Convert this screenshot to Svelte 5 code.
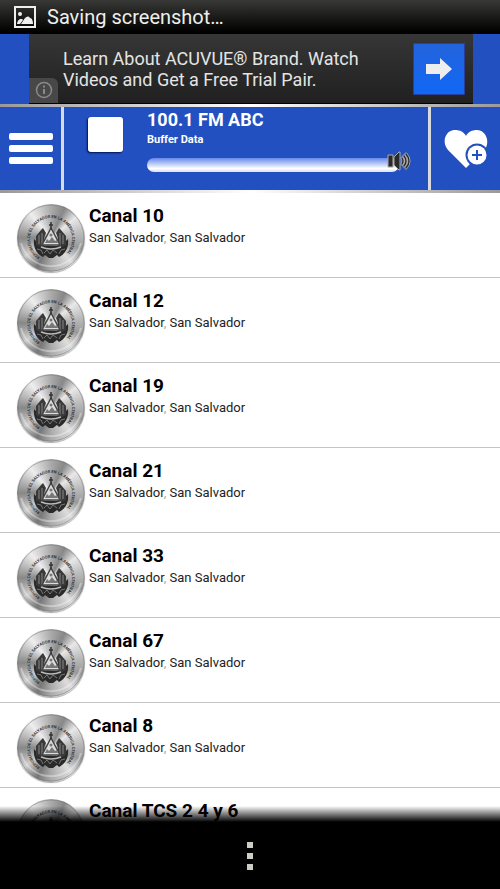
<script lang="ts">
  interface Station {
    name: string;
    city: string;
    region: string;
  }

  const names = [
    'Canal 10',
    'Canal 12',
    'Canal 19',
    'Canal 21',
    'Canal 33',
    'Canal 67',
    'Canal 8',
    'Canal TCS 2 4 y 6'
  ];

  const stations: Station[] = names.map((name) => ({
    name,
    city: 'San Salvador',
    region: 'San Salvador'
  }));

  let volume = $state(100);
</script>

<!-- shared crest, reused by every station -->
<svg class="defs" aria-hidden="true">
  <defs>
    <path id="ring" d="M22.9 52.8A21 21 0 1 1 45.1 52.8" />
    <symbol id="crest" viewBox="0 0 68 68">
      <circle cx="34" cy="34" r="33" fill="none" stroke="#777" stroke-opacity="0.5" />
      <path d="M4 39a31 31 0 0 0 60 0" fill="none" stroke="#fff" stroke-opacity="0.35" stroke-width="2" />
      <text font-family="Roboto, sans-serif" font-size="4" font-weight="500" fill="#222">
        <textPath href="#ring">REPÚBLICA DE EL SALVADOR EN LA AMÉRICA CENTRAL</textPath>
      </text>
      <path
        d="M17 35c-1 9 3 15 9 18l2-2 4 3h4l4-3 2 2c6-3 10-9 9-18l-4 4-5 3H26l-5-3z"
        fill="#2a2a2a"
      />
      <path d="M20 45l4 1 2 4M27 49l3-3 3 4 3-4 4 3M48 45l-4 1-2 4" fill="none" stroke="#777" stroke-width="1" />
      <path d="M24 26l-5 6v9l6 3 4-4-2-6 2-5-3-5zM44 26l5 6v9l-6 3-4-4 2-6-2-5 3-5z" fill="#3a3a3a" />
      <path d="M22 31v9M25 29v12M43 29v12M46 31v9" stroke="#888" stroke-width="1" />
      <path d="M34 24l9 17H25z" fill="#ddd" stroke="#444" stroke-width="1.5" />
      <path d="M28 39l2-4 2 2 3-4 3 4 2-1 1 3z" fill="#777" />
      <path d="M34 18v7M32 21h4" stroke="#333" stroke-width="1.5" />
      <circle cx="34" cy="31" r="1.5" fill="#777" />
      <path d="M24 43q10 4 20 0" fill="none" stroke="#bbb" stroke-width="1.5" />
    </symbol>
  </defs>
</svg>

<div class="app">
  <div class="status-bar">
    <svg viewBox="0 0 22 22" width="22" height="22" aria-hidden="true">
      <rect x="1" y="1" width="20" height="20" fill="none" stroke="#eee" stroke-width="2" />
      <circle cx="6" cy="8" r="2" fill="#eee" />
      <path d="M3 18c0-3 2-5 4-5 1 0 2 0 2 1l-3 4z" fill="#eee" />
      <path d="M7 18l4-6c2-2 4-2 5 0 2 0 3 3 3 6z" fill="#eee" />
    </svg>
    <span>Saving screenshot…</span>
  </div>

  <div class="ad-strip">
    <a class="ad" href="#ad">
      <span class="ad-text">Learn About ACUVUE® Brand. Watch Videos and Get a Free Trial Pair.</span>
      <span class="ad-go">
        <svg viewBox="0 0 52 52" width="52" height="52" aria-hidden="true">
          <path d="M13 21h14v-6l12 11-12 11v-6H13z" fill="#eee" />
        </svg>
      </span>
      <span class="ad-info">
        <svg viewBox="0 0 18 18" width="18" height="18" aria-hidden="true">
          <circle cx="9" cy="9" r="7.5" fill="none" stroke="#8a8a8a" stroke-width="1.5" />
          <path d="M9 8v5M9 4.5v2" stroke="#8a8a8a" stroke-width="2" />
        </svg>
      </span>
    </a>
  </div>

  <header class="player">
    <button class="menu-btn" aria-label="Menu">
      <i></i><i></i><i></i>
    </button>
    <div class="now-playing">
      <button class="stop-btn" aria-label="Stop"></button>
      <div class="track-info">
        <h1>100.1 FM ABC</h1>
        <p>Buffer Data</p>
        <div class="volume">
          <input type="range" min="0" max="100" bind:value={volume} aria-label="Volume" />
          <span class="speaker" style:left="{volume}%">
            <svg viewBox="0 0 24 20" width="24" height="20" aria-hidden="true">
              <g stroke="#aaa" stroke-width="1" fill="#292929">
                <path d="M1 4h5v12H1z" />
                <path d="M7 6l5-5h1v18h-1l-5-5z" />
              </g>
              <g fill="none" stroke="#aaa" stroke-width="3" stroke-linecap="round">
                <path d="M15 7q2 3 0 6M17 5q4 5 0 10M19 3q6 7 0 14" />
              </g>
              <g fill="none" stroke="#292929" stroke-width="1.3" stroke-linecap="round">
                <path d="M15 7q2 3 0 6M17 5q4 5 0 10M19 3q6 7 0 14" />
              </g>
            </svg>
          </span>
        </div>
      </div>
    </div>
    <button class="fav-btn" aria-label="Add to favorites">
      <svg viewBox="0 0 44 40" width="44" height="40" aria-hidden="true">
        <path
          d="M22 39L6 23C1 18 0 14 1 9 3 3 7 1 11 1c5 0 9 2 11 6 2-4 6-6 11-6 5 0 9 4 10 9 1 6-1 10-5 13z"
          fill="#fff"
        />
        <circle cx="33" cy="26" r="11.5" fill="#2250c0" />
        <circle cx="33" cy="26" r="9.5" fill="#fff" />
        <path d="M33 21v10M28 26h10" stroke="#2250c0" stroke-width="2" />
      </svg>
    </button>
  </header>

  <main class="stations">
    <ul>
      {#each stations as station}
        <li>
          <a class="station" href="#station">
            <span class="badge">
              <svg width="68" height="68" aria-hidden="true"><use href="#crest" /></svg>
            </span>
            <span class="station-info">
              <strong>{station.name}</strong>
              <small>{station.city}<span class="comma">,</span> {station.region}</small>
            </span>
          </a>
        </li>
      {/each}
    </ul>
  </main>

  <nav class="nav-bar">
    <button class="more-btn" aria-label="More options">
      <i></i><i></i><i></i>
    </button>
  </nav>
</div>

<style>
  :global(body) {
    margin: 0;
    background: #000;
  }

  .defs {
    position: absolute;
    width: 0;
    height: 0;
  }

  .app {
    display: flex;
    flex-direction: column;
    height: 100vh;
    font-family: Roboto, sans-serif;
    background: #fff;
  }

  button {
    padding: 0;
    border: none;
    background: none;
    cursor: pointer;
  }

  a {
    color: inherit;
    text-decoration: none;
  }

  .status-bar {
    display: flex;
    flex: none;
    align-items: center;
    gap: 11px;
    height: 34px;
    padding-left: 14px;
    box-sizing: border-box;
    background: linear-gradient(#383836, #000 95%);
    color: #eee;
    font-size: 20px;
  }

  .ad-strip {
    flex: none;
    padding: 0 27px 0 29px;
    background: #2250c0;
  }

  .ad {
    position: relative;
    display: flex;
    align-items: center;
    justify-content: space-between;
    height: 70px;
    padding: 0 8px 0 34px;
    box-sizing: border-box;
    border-bottom: 1px solid #000;
    background: linear-gradient(#363636, #202020);
    color: #e4e4e4;
  }

  .ad-text {
    max-width: 320px;
    font-size: 18px;
    line-height: 21px;
  }

  .ad-go {
    display: flex;
    border-radius: 2px;
    background: linear-gradient(#2463dc, #1068f4);
    box-shadow: 0 0 0 1px #2b3f9a inset;
  }

  .ad-info {
    position: absolute;
    left: 0;
    bottom: 0;
    display: flex;
    padding: 3px 5px 4px 6px;
    border-top-right-radius: 6px;
    background: #484848;
  }

  .player {
    display: flex;
    flex: none;
    height: 89px;
    box-sizing: border-box;
    border: solid;
    border-width: 3px 0;
    border-image: linear-gradient(90deg, #2250c0 3px, #999 3px, #fff 50%, #999) 3;
    background: #2250c0;
    color: #fff;
  }

  .menu-btn {
    display: flex;
    flex-direction: column;
    align-items: center;
    justify-content: center;
    gap: 5px;
    width: 61px;
  }

  .menu-btn i {
    width: 44px;
    height: 7px;
    border-radius: 2px;
    background: #fff;
  }

  .now-playing {
    display: flex;
    flex: 1;
    align-items: flex-start;
    gap: 24px;
    padding: 0 17px 0 24px;
    border: solid #d9d9e0;
    border-width: 0 3px;
  }

  .stop-btn {
    width: 35px;
    height: 35px;
    margin-top: 10px;
    border-radius: 3px;
    background: #fff;
    box-shadow: -1px 1px 2px #001050;
  }

  .track-info {
    flex: 1;
  }

  h1 {
    margin: 0;
    font-size: 18px;
    line-height: 26px;
  }

  p {
    margin: 0;
    font-size: 11px;
    font-weight: 700;
    line-height: 14px;
  }

  .volume {
    position: relative;
    height: 14px;
    margin: 11px 12px 0 0;
  }

  .volume input {
    display: block;
    width: 100%;
    height: 14px;
    margin: 0;
    border-radius: 7px;
    background: linear-gradient(#6688ea, #fff 75%, #d5dffc);
    appearance: none;
    cursor: pointer;
  }

  .volume input::-webkit-slider-thumb {
    width: 24px;
    height: 20px;
    opacity: 0;
    appearance: none;
  }

  .speaker {
    position: absolute;
    bottom: 1px;
    display: flex;
    transform: translateX(-50%);
    pointer-events: none;
  }

  .fav-btn {
    display: flex;
    align-items: center;
    justify-content: center;
    width: 69px;
  }

  .stations {
    position: relative;
    flex: 1;
    min-height: 0;
    overflow: hidden;
  }

  .stations::after {
    content: '';
    position: absolute;
    right: 0;
    bottom: 0;
    left: 0;
    height: 16px;
    background: linear-gradient(transparent, #000);
    pointer-events: none;
  }

  ul {
    margin: 0;
    padding: 0;
    list-style: none;
  }

  .station {
    display: flex;
    gap: 4px;
    height: 85px;
    padding: 11px 17px 0;
    box-sizing: border-box;
    border-bottom: 1px solid #c4c4c4;
  }

  .badge {
    width: 68px;
    height: 68px;
    border-radius: 50%;
    background: conic-gradient(
      #aaa,
      #888 25deg,
      #e8e8e8 50deg,
      #bbb 80deg,
      #999 110deg,
      #ddd 140deg,
      #aaa 180deg,
      #777 205deg,
      #ccc 235deg,
      #888 270deg,
      #bbb 295deg,
      #eee 320deg,
      #aaa
    );
    box-shadow: 0 1px 1px #aaa;
  }

  .station-info {
    display: flex;
    flex-direction: column;
    color: #000;
  }

  strong {
    font-size: 19px;
    font-weight: 700;
    line-height: 24px;
  }

  small {
    font-size: 13px;
    line-height: 20px;
    color: #222;
  }

  .comma {
    color: #aaa;
  }

  .nav-bar {
    display: flex;
    flex: none;
    align-items: center;
    justify-content: center;
    height: 67px;
    background: #000;
  }

  .more-btn {
    display: flex;
    flex-direction: column;
    gap: 5px;
  }

  .more-btn i {
    width: 6px;
    height: 6px;
    background: #cfccc4;
  }
</style>
